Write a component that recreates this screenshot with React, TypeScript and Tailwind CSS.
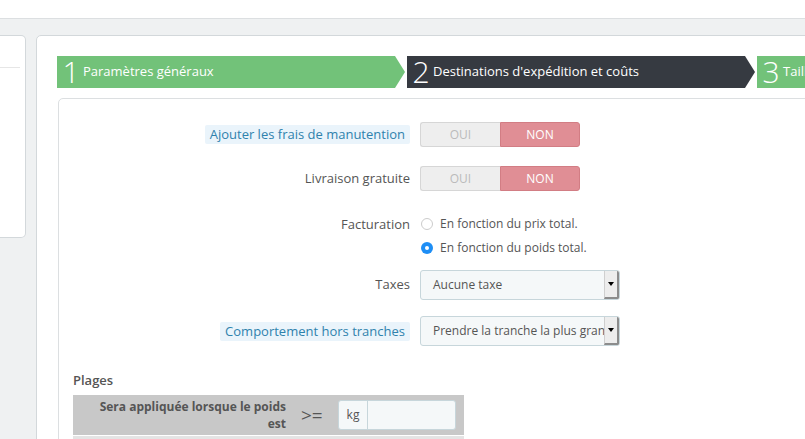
import React from 'react';

// Shipping carrier wizard – step 2 (destinations & costs)

const font = { fontFamily: '"Open Sans", "Liberation Sans", sans-serif' };

const Toggle: React.FC = () => (
  <div className="flex h-[25px] w-[160px] text-[12px]">
    <div className="flex w-1/2 items-center justify-center rounded-l-[3px] border border-r-0 border-[#d6d6d6] bg-[#eeeeee] text-[#bbbbbb]">
      OUI
    </div>
    <div className="flex w-1/2 items-center justify-center rounded-r-[3px] border border-[#d27d84] bg-[#e08e95] text-white">
      NON
    </div>
  </div>
);

const Select: React.FC<{ value: string }> = ({ value }) => (
  <div className="relative flex h-[30px] w-[200px] items-center overflow-hidden rounded-[3px] border border-[#c7d6db] bg-[#f5f8f9] pl-[12px] pr-[16px] text-[12px] text-[#555]">
    <span className="whitespace-nowrap">{value}</span>
    <div className="absolute right-0 top-0 flex h-[28px] w-[15px] items-center justify-center border-b-2 border-l border-r-2 border-b-[#8c8c8c] border-l-[#cfcfcf] border-r-[#8c8c8c] bg-[#ededed]">
      <div className="h-0 w-0 border-x-[3px] border-t-[4px] border-x-transparent border-t-black" />
    </div>
  </div>
);

const Row: React.FC<{ label: React.ReactNode; children: React.ReactNode; className?: string; center?: boolean }> = ({
  label,
  children,
  className = '',
  center = true,
}) => (
  <div className={`flex ${center ? 'items-center' : 'items-start'} ${className}`}>
    <div className="flex w-[351px] justify-end text-[13px] text-[#555]">{label}</div>
    <div className="ml-[10px]">{children}</div>
  </div>
);

const Tip: React.FC<{ children: React.ReactNode }> = ({ children }) => (
  <span className="rounded-[2px] bg-[#eaf4fb] px-[5px] leading-[19px] text-[#2f82ad]">{children}</span>
);

const Radio: React.FC<{ checked?: boolean; label: string }> = ({ checked, label }) => (
  <div className="flex h-[24px] items-center text-[12px] text-[#555]">
    {checked ? (
      <div className="ml-[1px] flex h-[12px] w-[12px] items-center justify-center rounded-full bg-[#1e8ef5]">
        <div className="h-[4px] w-[4px] rounded-full bg-white" />
      </div>
    ) : (
      <div className="ml-[1px] h-[12px] w-[12px] rounded-full border border-[#cccccc] bg-white" />
    )}
    <span className="ml-[7px]">{label}</span>
  </div>
);

const Step: React.FC<{ n: string; label: string; dark?: boolean; className?: string }> = ({ n, label, dark, className = '' }) => (
  <div
    className={`flex h-[32px] shrink-0 items-center text-white [clip-path:polygon(0_0,calc(100%_-_10px)_0,100%_50%,calc(100%_-_10px)_100%,0_100%)] ${
      dark ? 'bg-[#363a41]' : 'bg-[#72c279]'
    } ${className}`}
  >
    <span className="ml-[4px] w-[20px] text-center text-[30px] font-light leading-none">{n}</span>
    <span className="ml-[2px] whitespace-nowrap text-[13px]">{label}</span>
  </div>
);

export default function App() {
  return (
    <div className="h-[439px] w-[805px] overflow-hidden bg-[#eff1f2]" style={font}>
      <div className="h-[19px] border-b border-[#dcdfe1] bg-white" />
      <div className="flex gap-[10px] pt-[16px]">
        {/* side panel */}
        <div className="h-[203px] w-[26px] shrink-0 rounded-r-[5px] border border-l-0 border-[#d3d8db] bg-white">
          <div className="mt-[31px] w-[20px] border-t border-[#e6e6e6]" />
        </div>

        {/* main panel */}
        <div className="w-[1000px] shrink-0 rounded-[5px] border border-[#d3d8db] bg-white pl-[20px] pt-[20px]">
          <div className="flex">
            <Step n="1" label="Paramètres généraux" className="w-[348px]" />
            <Step n="2" label="Destinations d'expédition et coûts" dark className="ml-[2px] w-[348px]" />
            <Step n="3" label="Taille, poids et accès de groupe" className="ml-[2px] w-[300px]" />
          </div>

          <div className="mt-[10px] ml-[1px] h-[400px] rounded-[5px] border border-[#dcdfe1] pt-[23px]">
            <Row label={<Tip>Ajouter les frais de manutention</Tip>}>
              <Toggle />
            </Row>
            <Row label="Livraison gratuite" className="mt-[19px]">
              <Toggle />
            </Row>
            <Row label={<span className="leading-[24px]">Facturation</span>} className="mt-[21px]" center={false}>
              <Radio label="En fonction du prix total." />
              <Radio checked label="En fonction du poids total." />
            </Row>
            <Row label="Taxes" className="mt-[10px]">
              <Select value="Aucune taxe" />
            </Row>
            <Row label={<Tip>Comportement hors tranches</Tip>} className="mt-[16px]">
              <Select value="Prendre la tranche la plus grande" />
            </Row>

            <div className="ml-[14px] mt-[26px]">
              <div className="text-[13px] font-semibold leading-[16px] text-[#555]">Plages</div>
              <div className="mt-[7px] w-[391px]">
                <div className="flex h-[40px] items-center bg-[#c8c8c8]">
                  <div className="w-[213px] text-right text-[12px] font-bold leading-[17px] text-[#555]">
                    Sera appliquée lorsque le poids
                    <br />
                    est
                  </div>
                  <div className="ml-[15px] w-[22px] text-[19px] leading-none text-[#555]">&gt;=</div>
                  <div className="ml-[15px] flex h-[30px] w-[118px] rounded-[3px] border border-[#c7d6db] bg-[#f5f8f9] text-[12px] text-[#555]">
                    <div className="flex w-[29px] items-center justify-center border-r border-[#c7d6db]">kg</div>
                  </div>
                </div>
                <div className="mt-[1px] h-[20px] bg-[#e4e4e4]" />
              </div>
            </div>
          </div>
        </div>
      </div>
    </div>
  );
}
